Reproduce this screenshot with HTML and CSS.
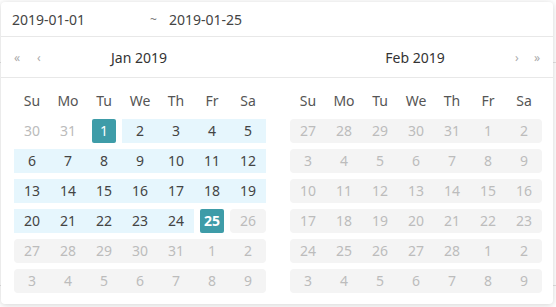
FILE: index.html
```html
<!DOCTYPE html>
<html lang="en">
  <head>
    <meta charset="UTF-8" />
    <meta name="viewport" content="width=device-width, initial-scale=1.0" />
    <title>Date Range Picker</title>
    <link rel="stylesheet" href="styles.css">
  </head>
  <body>
    <!-- table rows behind the popup -->
    <div class="backdrop">
      <div class="backdrop-row"></div>
    </div>

    <div class="picker">
      <div class="inputs">
        <div class="date-input">2019-01-01</div>
        <div class="tilde">~</div>
        <div class="date-input">2019-01-25</div>
      </div>

      <div class="panels">
        <div class="panel">
          <div class="panel-head">
            <span class="nav">&laquo;</span>
            <span class="nav">&lsaquo;</span>
            <span class="title">Jan 2019</span>
          </div>
          <div class="panel-body" id="janGrid"></div>
        </div>

        <div class="panel">
          <div class="panel-head">
            <span class="title">Feb 2019</span>
            <span class="nav nav-right">&rsaquo;</span>
            <span class="nav nav-last">&raquo;</span>
          </div>
          <div class="panel-body" id="febGrid"></div>
        </div>
      </div>
    </div>

    <script>
      const WEEK = ["Su", "Mo", "Tu", "We", "Th", "Fr", "Sa"];

      // state: o = other month, s = selected, sb = selected bold,
      // r = in range, d = disabled
      const JAN = [
        [30, "o"], [31, "o"], [1, "s"], [2, "r"], [3, "r"], [4, "r"], [5, "r"],
        [6, "r"], [7, "r"], [8, "r"], [9, "r"], [10, "r"], [11, "r"], [12, "r"],
        [13, "r"], [14, "r"], [15, "r"], [16, "r"], [17, "r"], [18, "r"], [19, "r"],
        [20, "r"], [21, "r"], [22, "r"], [23, "r"], [24, "r"], [25, "sb"], [26, "d"],
        [27, "d"], [28, "d"], [29, "d"], [30, "d"], [31, "d"], [1, "d"], [2, "d"],
        [3, "d"], [4, "d"], [5, "d"], [6, "d"], [7, "d"], [8, "d"], [9, "d"]
      ];

      const FEB = [27, 28, 29, 30, 31, 1, 2, 3, 4, 5, 6, 7, 8, 9,
        10, 11, 12, 13, 14, 15, 16, 17, 18, 19, 20, 21, 22, 23,
        24, 25, 26, 27, 28, 1, 2, 3, 4, 5, 6, 7, 8, 9].map(function (n) {
        return [n, "d"];
      });

      function build(el, days) {
        let html = '<div class="week">';
        WEEK.forEach(function (w) {
          html += '<div class="week-day">' + w + "</div>";
        });
        html += "</div>";

        for (let r = 0; r < 6; r++) {
          html += '<div class="row">';
          for (let c = 0; c < 7; c++) {
            const day = days[r * 7 + c];
            const prev = c > 0 ? days[r * 7 + c - 1][1] : null;
            const next = c < 6 ? days[r * 7 + c + 1][1] : null;
            let cls = "cell";
            if (day[1] === "o") cls += " other";
            if (day[1] === "r") cls += " range";
            if (day[1] === "d") {
              cls += " disabled";
              if (prev !== "d") cls += " run-start";
              if (next !== "d") cls += " run-end";
            }
            let inner = day[0];
            if (day[1] === "s" || day[1] === "sb") {
              const bold = day[1] === "sb" ? " bold" : "";
              inner = '<span class="selected' + bold + '">' + day[0] + "</span>";
            }
            html += '<div class="' + cls + '">' + inner + "</div>";
          }
          html += "</div>";
        }
        el.innerHTML = html;
      }

      build(document.getElementById("janGrid"), JAN);
      build(document.getElementById("febGrid"), FEB);
    </script>
  </body>
</html>
```

FILE: styles.css
```css
body {
  margin: 0;
  font-family: "Noto Sans", "Open Sans", sans-serif;
  font-size: 14px;
  color: #333;
  background: #fff;
}
.backdrop {
  padding-top: 62px;
}
.backdrop-row {
  height: 222px;
  border-top: 1px solid #e2e2e2;
  border-bottom: 1px solid #e2e2e2;
}
.picker {
  position: absolute;
  top: 2px;
  left: 1px;
  width: 552px;
  background: #fff;
  border-radius: 4px;
  box-shadow: 0 1px 6px rgba(0, 0, 0, 0.18);
}
.inputs {
  display: flex;
  align-items: center;
  height: 34px;
  padding-left: 11px;
  border-bottom: 1px solid #e8e8e8;
}
.date-input {
  width: 138px;
  color: #444;
}
.tilde {
  width: 19px;
  color: #777;
  font-size: 12px;
}
.panels {
  display: flex;
}
.panel {
  width: 276px;
}
.panel-head {
  display: flex;
  align-items: center;
  height: 40px;
  padding: 0 13px;
  border-bottom: 1px solid #e8e8e8;
  position: relative;
}
.nav {
  color: #aaa;
  font-size: 12px;
  width: 23px;
}
.nav-right {
  margin-left: auto;
  width: 19px;
}
.nav-last {
  width: auto;
}
.title {
  position: absolute;
  left: 0;
  right: 0;
  text-align: center;
  color: #333;
  pointer-events: none;
}
.panel-body {
  padding: 8px 11px 8px 13px;
}
.week,
.row {
  display: grid;
  grid-template-columns: repeat(7, 36px);
}
.week-day {
  height: 30px;
  line-height: 30px;
  text-align: center;
  color: #555;
}
.row {
  height: 30px;
  align-items: center;
}
.cell {
  height: 24px;
  line-height: 24px;
  text-align: center;
  color: #444;
}
.cell.other {
  color: #bbb;
}
.cell.range {
  background: #e6f6fd;
}
.cell.disabled {
  background: #f4f4f4;
  color: #bcbcbc;
}
.cell.run-start {
  border-radius: 4px 0 0 4px;
}
.cell.run-end {
  border-radius: 0 4px 4px 0;
}
.cell.run-start.run-end {
  border-radius: 4px;
}
.selected {
  display: inline-block;
  width: 24px;
  height: 24px;
  background: #3e9ca8;
  color: #fff;
  border-radius: 2px;
}
.selected.bold {
  font-weight: bold;
}
```
